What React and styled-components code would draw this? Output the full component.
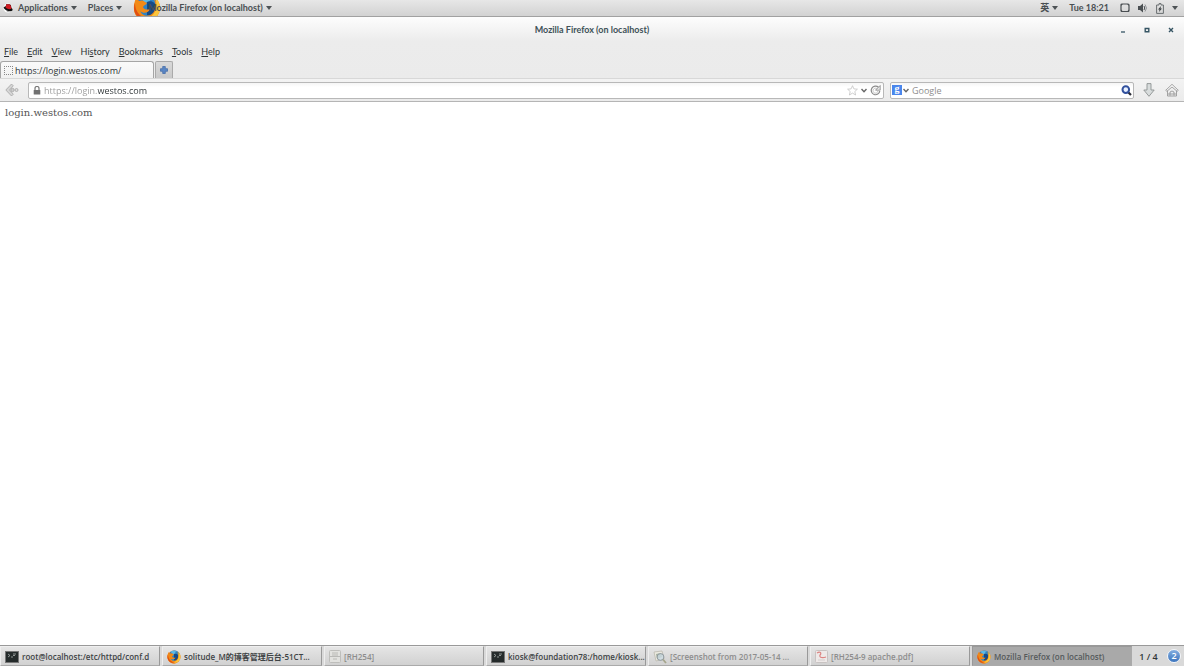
import { useState } from "react";

import styled, { createGlobalStyle } from "styled-components";

const menus = [
  ["", "F", "ile"],
  ["", "E", "dit"],
  ["", "V", "iew"],
  ["Hi", "s", "tory"],
  ["", "B", "ookmarks"],
  ["", "T", "ools"],
  ["", "H", "elp"],
];

const FirefoxIcon = ({ size = 14 }) => (
  <svg width={size} height={size} viewBox="0 0 28 28">
    <circle cx="14" cy="14" r="13" fill="#ea6c12" />
    <circle cx="15" cy="12" r="11" fill="#2f83c5" />
    <path d="M7 3c4-3 11-3 15 0-5-1-6 1-5 4l-5 2z" fill="#5db8e5" />
    <path d="M14 8c5-2 9 1 9 6s-4 8-9 7z" fill="#174b86" />
    <path
      d="M3 4c1 2 2 3 4 3 2-1 4 0 5 1l2 1c-1 2-3 2-4 4 1 3 5 3 7 2-1 4-7 5-10 2 3 7 13 6 15-2 1-5 0-8-2-11 4 3 6 8 5 12-2 8-6 11-12 11C2 26-2 16 3 4z"
      fill="#f28a16"
    />
    <path d="M22 3c6 5 7 15 1 20-4 3-9 3-13 1 11 1 16-9 12-21z" fill="#fbc53c" />
    <path d="M2 9c0 9 6 15 14 16C7 28-2 19 2 9z" fill="#e04e12" />
  </svg>
);

const RedHatIcon = () => (
  <svg width="10" height="10" viewBox="0 0 20 20">
    <circle cx="10" cy="10" r="9" fill="#fff" />
    <path d="M1 9c1-1 3-2 4-2l2-5c3 1 6-1 9 2l1 6c3 2 3 5 0 6-5 2-14-2-16-7z" fill="#111" />
    <path d="M5 9l2-7c3 1 6-1 8 2l2 7c-2 2-8 2-12-2z" fill="#d11b22" />
    <path d="M6 14c2 2 5 3 8 3-3 2-8 0-8-3z" fill="#777" />
  </svg>
);

const Caret = () => (
  <svg width="6" height="4" viewBox="0 0 6 4">
    <path d="M0 0h6L3 4z" fill="#4e5356" />
  </svg>
);

const Chevron = () => (
  <svg width="6" height="5" viewBox="0 0 6 5">
    <path d="M.5 1L3 3.8 5.5 1" fill="none" stroke="#666" strokeWidth="1.4" />
  </svg>
);

const ScreenIcon = () => (
  <svg width="10" height="10" viewBox="0 0 10 10">
    <rect x="1" y="1" width="8" height="7.5" rx="1" fill="none" stroke="#4a4f52" strokeWidth="1.2" />
    <path d="M1 6.5l2.5 2.5H1zM9 6.5L6.5 9H9zM1 1h2L1 3zM9 1v2L7 1z" fill="#4a4f52" />
  </svg>
);

const VolumeIcon = () => (
  <svg width="10" height="10" viewBox="0 0 10 10">
    <path d="M0 3h2l3-2.5v9L2 7H0z" fill="#4a4f52" />
    <path d="M6 3q1.5 2 0 4" fill="none" stroke="#4a4f52" strokeWidth="1" />
    <path d="M7 1.5q3 3.5 0 7" fill="none" stroke="#92969a" strokeWidth="1" />
  </svg>
);

const BatteryIcon = () => (
  <svg width="8" height="11" viewBox="0 0 8 11">
    <path d="M.6 2H3V.6h2V2h2.4v8.4H.6z" fill="none" stroke="#696e70" strokeWidth="1" />
    <path d="M5 3L2 6.5h1.5L3 9l3-3.5H4.5z" fill="#3e4345" />
  </svg>
);

const BackIcon = () => (
  <svg width="14" height="14" viewBox="0 0 14 14">
    <path d="M6.5 1L.8 7l5.7 6 1.8-1.8L4.5 7l3.8-4.2z" fill="#d5d5d5" stroke="#a5a5a5" strokeWidth=".8" />
    <circle cx="7.5" cy="7" r="1.7" fill="#ccc" stroke="#a5a5a5" strokeWidth=".8" />
    <circle cx="11.5" cy="7" r="1.5" fill="#ddd" stroke="#a5a5a5" strokeWidth=".8" />
  </svg>
);

const LockIcon = () => (
  <svg width="8" height="9" viewBox="0 0 8 9">
    <path d="M2 5V2.5q0-2 2-2t2 2V5" fill="none" stroke="#777" strokeWidth="1.2" />
    <rect x=".7" y="4" width="6.6" height="4.5" rx=".5" fill="#717171" />
  </svg>
);

const StarIcon = () => (
  <svg width="11" height="11" viewBox="0 0 11 11">
    <path d="M5.5.7l1.4 3.2 3.5.3-2.6 2.3.8 3.5-3.1-1.9L2.4 10l.8-3.5L.6 4.2l3.5-.3z" fill="#fff" stroke="#c3c3c3" strokeWidth=".8" />
  </svg>
);

const ReloadIcon = () => (
  <svg width="11" height="11" viewBox="0 0 11 11">
    <path d="M8.5 2.3A4.3 4.3 0 1 0 9.8 6" fill="none" stroke="#8b8b8b" strokeWidth="1.2" />
    <path d="M7.4 4A2.5 2.5 0 1 0 8 6" fill="none" stroke="#aaa" strokeWidth=".7" />
    <path d="M10.2.5v4.7H5.5z" fill="#e8e8e8" stroke="#888" strokeWidth=".8" />
  </svg>
);

const SearchIcon = () => (
  <svg width="11" height="11" viewBox="0 0 11 11">
    <path d="M7 7l3 3" stroke="#292b35" strokeWidth="2.2" />
    <circle cx="4.8" cy="4.6" r="3.3" fill="#e9f1ff" stroke="#31509d" strokeWidth="2" />
  </svg>
);

const DownloadIcon = () => (
  <svg width="12" height="14" viewBox="0 0 12 14">
    <path d="M4 .6h4V7h3.2L6 13.3.8 7H4z" fill="#d8dcdc" stroke="#8d9292" strokeWidth=".9" />
  </svg>
);

const HomeIcon = () => (
  <svg width="14" height="14" viewBox="0 0 14 14">
    <path d="M2.5 7v6h9V7L7 3z" fill="#eee" stroke="#999" strokeWidth=".9" />
    <path d="M.7 7.3L7 1.3l6.3 6-1.2 1L7 4 1.9 8.3z" fill="#f5f5f5" stroke="#929292" strokeWidth=".8" />
    <path d="M5 12.7V9q2-2 4 0v3.7M3 11h8" fill="none" stroke="#999" strokeWidth=".9" />
  </svg>
);

const TerminalIcon = () => (
  <svg width="14" height="12" viewBox="0 0 14 12">
    <rect x=".5" y=".5" width="13" height="11" fill="#252b2b" stroke="#777" />
    <path d="M3 3l2 1.5L3 6M6 6h2M8 3h3M10 4.5H8" fill="none" stroke="#aab0ae" strokeWidth=".8" />
  </svg>
);

const FolderIcon = () => (
  <svg width="12" height="13" viewBox="0 0 12 13">
    <rect x=".5" y=".5" width="11" height="12" rx="1" fill="#e2e2df" stroke="#bebebb" />
    <path d="M1 6.5h10M3 3h6M3 5h6M4 9h4" stroke="#b4b4b1" strokeWidth=".9" />
  </svg>
);

const ViewerIcon = () => (
  <svg width="14" height="14" viewBox="0 0 14 14">
    <path d="M1 2l8-1 2 8-8 2z" fill="#eceae1" stroke="#bbb9ae" strokeWidth=".8" />
    <path d="M3 4l5-1 1 4-5 2z" fill="#a6b2a0" />
    <circle cx="7.5" cy="7" r="3.4" fill="#cbdae2" fillOpacity=".8" stroke="#8f999d" />
    <path d="M10 9.5l3 3.5" stroke="#a5a58c" strokeWidth="1.8" />
  </svg>
);

const PdfIcon = () => (
  <svg width="13" height="13" viewBox="0 0 13 13">
    <rect x=".5" y=".5" width="12" height="12" rx="1" fill="#eee9e8" stroke="#c8c3c2" />
    <path d="M2 3c3-2 5 0 3 2-1 3 3 3 6 2" fill="none" stroke="#dc8583" strokeWidth="1.2" />
    <path d="M3 10h7" stroke="#d2cecd" />
  </svg>
);

const tasks = [
  { icon: <TerminalIcon />, text: "root@localhost:/etc/httpd/conf.d" },
  { icon: <FirefoxIcon />, text: "solitude_M的博客管理后台-51CT..." },
  { icon: <FolderIcon />, text: "[RH254]", dim: true },
  { icon: <TerminalIcon />, text: "kiosk@foundation78:/home/kiosk..." },
  { icon: <ViewerIcon />, text: "[Screenshot from 2017-05-14 ...", dim: true },
  { icon: <PdfIcon />, text: "[RH254-9 apache.pdf]", dim: true },
  { icon: <FirefoxIcon />, text: "Mozilla Firefox (on localhost)", active: true },
];

const App = () => {
  const [url, setUrl] = useState("https://login.westos.com");
  const [keyword, setKeyword] = useState("");

  return (
    <Desktop>
      <GlobalStyle />
      <TopPanel>
        <PanelButton>
          <RedHatIcon />
          <PanelText>Applications</PanelText>
          <Caret />
        </PanelButton>
        <PanelButton>
          Places
          <Caret />
        </PanelButton>
        <AppButton>
          <AppIcon>
            <FirefoxIcon size={28} />
          </AppIcon>
          Mozilla Firefox (on localhost)
          <Caret />
        </AppButton>
        <Status>
          <PanelButton>
            英
            <Caret />
          </PanelButton>
          <PanelButton>Tue 18:21</PanelButton>
          <TrayButton aria-label="System">
            <ScreenIcon />
            <VolumeIcon />
            <BatteryIcon />
            <Caret />
          </TrayButton>
        </Status>
      </TopPanel>

      <Chrome>
        <TitleBar>
          <Title>Mozilla Firefox (on localhost)</Title>
          <WindowButtons>
            <WindowButton aria-label="Minimize">
              <svg width="6" height="6" viewBox="0 0 6 6">
                <path d="M1 5h4" stroke="#355463" strokeWidth="1.3" />
              </svg>
            </WindowButton>
            <WindowButton aria-label="Maximize">
              <svg width="6" height="6" viewBox="0 0 6 6">
                <path d="M1.2 1.5h3.6v3.3H1.2z" fill="none" stroke="#355463" strokeWidth="1.4" />
              </svg>
            </WindowButton>
            <WindowButton aria-label="Close">
              <svg width="6" height="6" viewBox="0 0 6 6">
                <path d="M1 1l4 4M5 1L1 5" stroke="#355463" strokeWidth="1.4" />
              </svg>
            </WindowButton>
          </WindowButtons>
        </TitleBar>
        <MenuBar>
          {menus.map(([before, key, after]) => (
            <MenuButton key={before + key}>
              {before}
              <u>{key}</u>
              {after}
            </MenuButton>
          ))}
        </MenuBar>
        <Tabs>
          <Tab>
            <Favicon />
            https://login.westos.com/
          </Tab>
          <NewTab aria-label="New tab">
            <svg width="8" height="8" viewBox="0 0 8 8">
              <path d="M2.7.5h2.6v2.2h2.2v2.6H5.3v2.2H2.7V5.3H.5V2.7h2.2z" fill="#5a87c5" stroke="#3c66a5" strokeWidth=".7" />
            </svg>
          </NewTab>
        </Tabs>
      </Chrome>

      <NavBar>
        <BackButton aria-label="Back">
          <BackIcon />
        </BackButton>
        <Field $grow>
          <LockIcon />
          <UrlInput aria-label="Address" value={url} onChange={(e) => setUrl(e.target.value)} />
          <IconButton aria-label="Bookmark">
            <StarIcon />
          </IconButton>
          <IconButton aria-label="History">
            <Chevron />
          </IconButton>
          <IconButton aria-label="Reload">
            <ReloadIcon />
          </IconButton>
        </Field>
        <Field>
          <EngineButton aria-label="Search engine">
            <Engine>g</Engine>
            <Chevron />
          </EngineButton>
          <SearchInput
            aria-label="Search"
            placeholder="Google"
            value={keyword}
            onChange={(e) => setKeyword(e.target.value)}
          />
          <IconButton aria-label="Go">
            <SearchIcon />
          </IconButton>
        </Field>
        <NavActions>
          <IconButton aria-label="Downloads">
            <DownloadIcon />
          </IconButton>
          <IconButton aria-label="Home">
            <HomeIcon />
          </IconButton>
        </NavActions>
      </NavBar>

      <Page>login.westos.com</Page>

      <TaskBar>
        {tasks.map(({ icon, text, dim, active }) => (
          <Task key={text} $dim={dim} $active={active}>
            {icon}
            {text}
          </Task>
        ))}
        <Workspace>1 / 4</Workspace>
        <Badge>2</Badge>
      </TaskBar>
    </Desktop>
  );
};

const GlobalStyle = createGlobalStyle`
  * {
    box-sizing: border-box;
  }
  body {
    margin: 0;
    font-family: "Open Sans", "Noto Sans CJK SC", sans-serif;
    font-size: 9px;
    color: #2e3436;
  }
  button, input {
    margin: 0;
    padding: 0;
    border: none;
    background: none;
    font: inherit;
    color: inherit;
  }
  svg {
    display: block;
    flex-shrink: 0;
  }
`;

const Desktop = styled.div`
  display: flex;
  flex-direction: column;
  min-height: 100vh;
  background-color: #fff;
`;

const TopPanel = styled.header`
  display: flex;
  align-items: center;
  height: 17px;
  padding: 0 6px 0 3px;
  gap: 11px;
  border-bottom: 1px solid #a1a1a1;
  background: linear-gradient(#e7e7e7, #d2d2d2);
  font-family: Lato, "Noto Sans CJK SC", sans-serif;
  font-weight: 700;
  color: #4a4f52;
`;

const PanelButton = styled.button`
  display: flex;
  align-items: center;
  gap: 3px;
  line-height: 16px;
  white-space: nowrap;
`;

const PanelText = styled.span`
  padding-left: 2px;
`;

const AppButton = styled(PanelButton)`
  position: relative;
  z-index: 0;
  padding-left: 15px;
`;

/* the big icon runs under the first letters of the title */
const AppIcon = styled.span`
  position: absolute;
  top: 0;
  left: 0;
  z-index: -1;
  height: 16px;
  overflow: hidden;
  display: flex;
  align-items: center;
`;

const Status = styled.div`
  display: flex;
  align-items: center;
  gap: 11px;
  margin-left: auto;
`;

const TrayButton = styled(PanelButton)`
  gap: 8px;
`;

const Chrome = styled.div`
  background: linear-gradient(#fdfdfd, #ececec 24px, #ebebeb);
`;

const TitleBar = styled.div`
  display: grid;
  grid-template-columns: 1fr auto 1fr;
  align-items: center;
  height: 25px;
`;

const Title = styled.h1`
  grid-column: 2;
  margin: 0;
  font-family: Lato, sans-serif;
  font-size: 9px;
  font-weight: 700;
  color: #405258;
`;

const WindowButtons = styled.div`
  display: flex;
  justify-content: flex-end;
  gap: 18px;
  padding-right: 10px;
`;

const WindowButton = styled.button`
  display: flex;
`;

const MenuBar = styled.nav`
  display: flex;
  align-items: center;
  gap: 9px;
  height: 19px;
  padding-left: 4px;
  font-family: Lato, sans-serif;
`;

const MenuButton = styled.button`
  line-height: 16px;
  u {
    text-underline-offset: 1px;
  }
`;

const Tabs = styled.div`
  display: flex;
  height: 17px;
  gap: 1px;
`;

const Tab = styled.button`
  display: flex;
  align-items: center;
  gap: 2px;
  width: 154px;
  padding-left: 3px;
  border: 1px solid #a5a5a5;
  border-bottom: none;
  border-radius: 3px 3px 0 0;
  background: linear-gradient(#fafafa, #f1f1f1);
`;

const Favicon = styled.span`
  width: 9px;
  height: 9px;
  border: 1px dotted #888;
`;

const NewTab = styled.button`
  display: flex;
  align-items: center;
  justify-content: center;
  width: 18px;
  border: 1px solid #aaa;
  border-bottom: none;
  border-radius: 2px 2px 0 0;
  background: linear-gradient(#d9d9d9, #c9c9c9);
`;

const NavBar = styled.div`
  display: flex;
  align-items: center;
  gap: 6px;
  height: 24px;
  padding: 0 5px;
  border-top: 1px solid #d8d8d8;
  border-bottom: 1px solid #b5b5b5;
  background: linear-gradient(#f3f3f3, #ebebeb);
`;

const Field = styled.div`
  display: flex;
  align-items: center;
  gap: 3px;
  height: 17px;
  min-width: 0;
  flex: ${(props) => (props.$grow ? "1" : "0 0 244px")};
  padding: 0 ${(props) => (props.$grow ? "2px 0 4px" : "1px")};
  border: 1px solid #b8b8b8;
  border-radius: 2px;
  background: linear-gradient(#f5f5f5, #fff 4px);
`;

const UrlInput = styled.input`
  flex: 1;
  min-width: 0;
  height: 14px;
  outline: none;
  background: linear-gradient(to right, #999 53px, #2e3436 53px);
  -webkit-background-clip: text;
  background-clip: text;
  -webkit-text-fill-color: transparent;
`;

const SearchInput = styled.input`
  flex: 1;
  min-width: 0;
  height: 14px;
  outline: none;
  &::placeholder {
    color: #8e8e8e;
  }
`;

const IconButton = styled.button`
  display: flex;
  align-items: center;
`;

const BackButton = styled(IconButton)`
  padding-right: 3px;
`;

const EngineButton = styled(IconButton)`
  gap: 1px;
`;

const Engine = styled.span`
  width: 10px;
  height: 10px;
  background-color: #4a86ec;
  color: #fff;
  font: bold 10px/8px "Liberation Serif", serif;
  text-align: center;
`;

const NavActions = styled.div`
  display: flex;
  gap: 10px;
  padding-left: 3px;
`;

const Page = styled.main`
  flex: 1;
  padding: 4px 5px;
  font-family: "DejaVu Serif", serif;
  font-size: 10px;
  line-height: 13px;
  color: #555;
`;

const TaskBar = styled.footer`
  display: flex;
  height: 21px;
  gap: 2px;
  border-top: 1px solid #999;
  background-color: #d9d9d9;
  font-weight: 600;
`;

const Task = styled.button`
  display: flex;
  align-items: center;
  gap: 3px;
  flex: 1;
  min-width: 0;
  padding: 1px 0 0 4px;
  overflow: hidden;
  border: 1px solid;
  border-color: ${(props) => (props.$active ? "#999 #aaa #aaa #999" : "#efefef #999 #aaa #eee")};
  background: ${(props) => (props.$active ? "#a9a9a9" : "linear-gradient(#e5e5e5, #d1d1d1)")};
  color: ${(props) => (props.$dim ? "#8d8d8d" : props.$active ? "#55595b" : "#3e4345")};
  font-size: 8px;
  line-height: 16px;
  white-space: nowrap;
`;

const Workspace = styled.span`
  width: 29px;
  text-align: center;
  line-height: 21px;
  white-space: nowrap;
`;

const Badge = styled.span`
  width: 14px;
  height: 14px;
  margin: 3px 3px 0 2px;
  border: 1px solid #f3f6fa;
  border-radius: 50%;
  background: linear-gradient(#84aee0, #3b74bd);
  color: #fff;
  line-height: 12px;
  text-align: center;
`;

export default App;
